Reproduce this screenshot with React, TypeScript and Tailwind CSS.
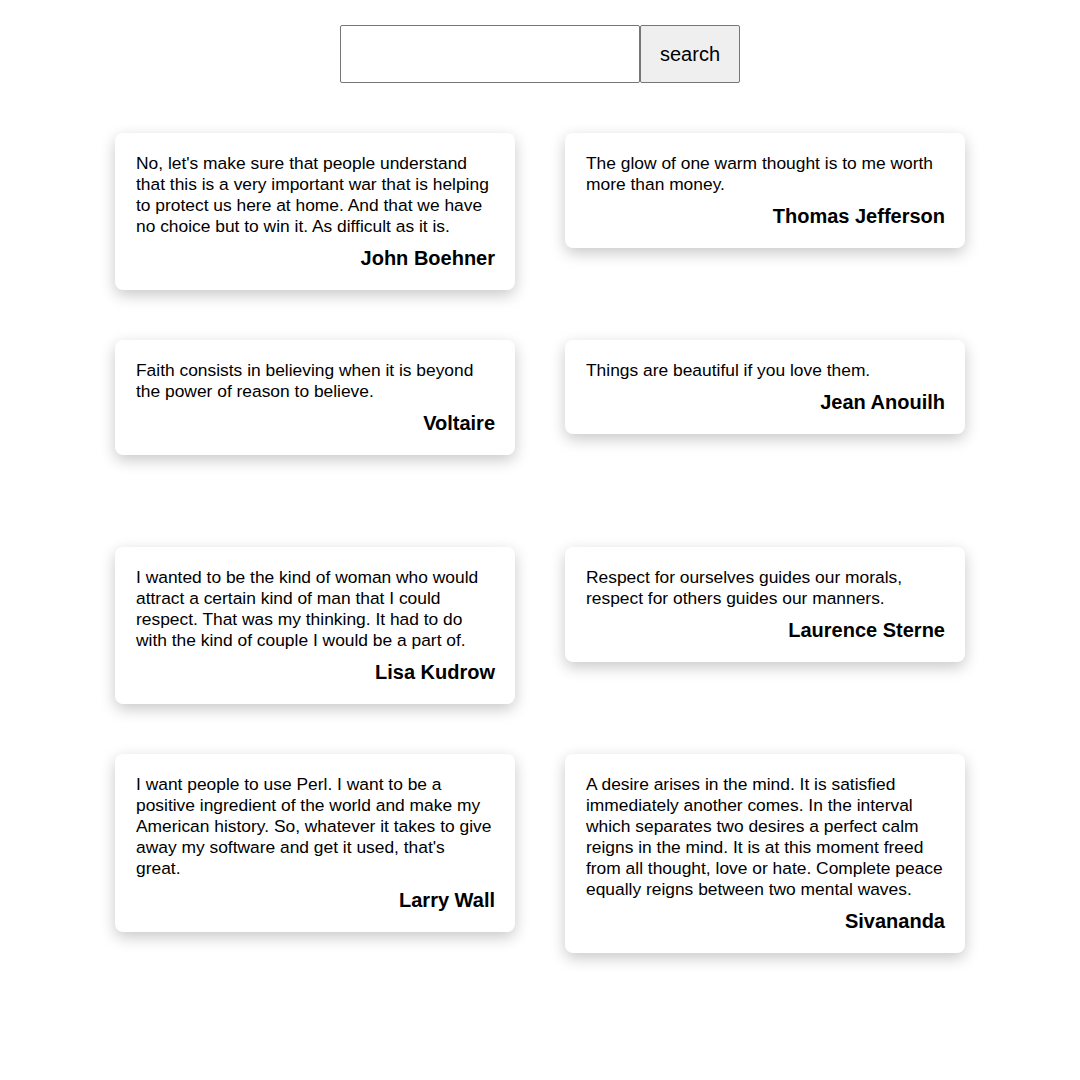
import React from "react";

const quotes = [
  { text: "No, let's make sure that people understand that this is a very important war that is helping to protect us here at home. And that we have no choice but to win it. As difficult as it is.", author: "John Boehner" },
  { text: "The glow of one warm thought is to me worth more than money.", author: "Thomas Jefferson" },
  { text: "Faith consists in believing when it is beyond the power of reason to believe.", author: "Voltaire" },
  { text: "Things are beautiful if you love them.", author: "Jean Anouilh" },
  { text: "I wanted to be the kind of woman who would attract a certain kind of man that I could respect. That was my thinking. It had to do with the kind of couple I would be a part of.", author: "Lisa Kudrow" },
  { text: "Respect for ourselves guides our morals, respect for others guides our manners.", author: "Laurence Sterne" },
  { text: "I want people to use Perl. I want to be a positive ingredient of the world and make my American history. So, whatever it takes to give away my software and get it used, that's great.", author: "Larry Wall" },
  { text: "A desire arises in the mind. It is satisfied immediately another comes. In the interval which separates two desires a perfect calm reigns in the mind. It is at this moment freed from all thought, love or hate. Complete peace equally reigns between two mental waves.", author: "Sivananda" },
];

export default function App() {
  return (
    <div className="min-h-[1080px] bg-white font-['Liberation_Sans',Arial,sans-serif] text-black">
      <div className="flex justify-center pt-[25px]">
        <input
          type="text"
          className="w-[300px] h-[58px] border border-[#767676] rounded-[2px] px-2 text-[20px] outline-none"
        />
        <button className="w-[100px] h-[58px] border border-[#767676] rounded-[2px] bg-[#efefef] text-[20px] text-black">
          search
        </button>
      </div>
      <div className="mx-auto mt-[50px] grid w-[850px] grid-cols-[400px_400px] gap-x-[50px] gap-y-[50px] auto-rows-[157px] items-start">
        {quotes.map((q, i) => (
          <div
            key={i}
            className="rounded-lg bg-white py-[20px] pl-[21px] pr-[20px] shadow-[0_5px_15px_rgba(0,0,0,0.22)]"
          >
            <p className="pr-[2px] text-[17.4px] leading-[21px]">{q.text}</p>
            <p className="mt-[10px] text-right text-[20px] font-bold leading-[23px]">{q.author}</p>
          </div>
        ))}
      </div>
    </div>
  );
}
